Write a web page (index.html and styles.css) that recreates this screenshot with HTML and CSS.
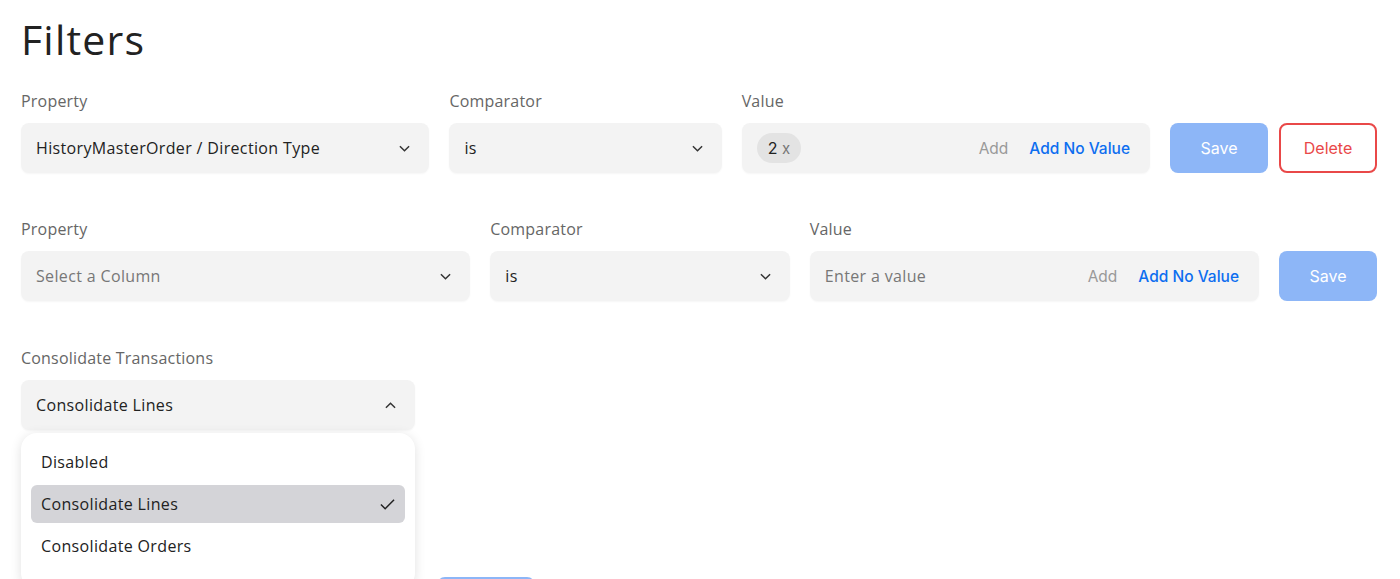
FILE: index.html
```html
<!DOCTYPE html>
<html lang="en">
<head>
    <meta charset="UTF-8">
    <meta name="viewport" content="width=device-width, initial-scale=1.0">
    <title>Filters</title>
    <link rel="stylesheet" href="styles.css">
</head>
<body>

<div class="page">
    <h1 class="title">Filters</h1>

    <!-- Existing filter -->
    <div class="filter-row">
        <div class="field wide">
            <label>Property</label>
            <div class="select">
                <span>HistoryMasterOrder / Direction Type</span>
                <svg class="chevron" viewBox="0 0 12 7"><path d="M1 1l5 5 5-5"/></svg>
            </div>
        </div>
        <div class="field narrow">
            <label>Comparator</label>
            <div class="select">
                <span>is</span>
                <svg class="chevron" viewBox="0 0 12 7"><path d="M1 1l5 5 5-5"/></svg>
            </div>
        </div>
        <div class="field wide">
            <label>Value</label>
            <div class="value-box">
                <span class="chip">2 <span class="chip-x">x</span></span>
                <span class="spacer"></span>
                <span class="add">Add</span>
                <span class="add-none">Add No Value</span>
            </div>
        </div>
        <div class="buttons">
            <button class="btn save">Save</button>
            <button class="btn delete">Delete</button>
        </div>
    </div>

    <!-- New filter -->
    <div class="filter-row">
        <div class="field wide">
            <label>Property</label>
            <div class="select">
                <span class="placeholder">Select a Column</span>
                <svg class="chevron" viewBox="0 0 12 7"><path d="M1 1l5 5 5-5"/></svg>
            </div>
        </div>
        <div class="field narrow">
            <label>Comparator</label>
            <div class="select">
                <span>is</span>
                <svg class="chevron" viewBox="0 0 12 7"><path d="M1 1l5 5 5-5"/></svg>
            </div>
        </div>
        <div class="field wide">
            <label>Value</label>
            <div class="value-box">
                <span class="placeholder">Enter a value</span>
                <span class="spacer"></span>
                <span class="add">Add</span>
                <span class="add-none">Add No Value</span>
            </div>
        </div>
        <div class="buttons">
            <button class="btn save">Save</button>
        </div>
    </div>

    <!-- Consolidate -->
    <div class="consolidate">
        <label>Consolidate Transactions</label>
        <div class="dropdown">
            <div class="select open">
                <span>Consolidate Lines</span>
                <svg class="chevron" viewBox="0 0 12 7"><path d="M1 6l5-5 5 5"/></svg>
            </div>
            <ul class="menu">
                <li>Disabled</li>
                <li class="selected">Consolidate Lines
                    <svg class="check" viewBox="0 0 16 12"><path d="M1 6.5l4.5 4.5L15 1.5"/></svg>
                </li>
                <li>Consolidate Orders</li>
            </ul>
        </div>
    </div>

    <!-- bottom save, mostly below the fold -->
    <div class="footer">
        <button class="btn save" aria-label="Save"></button>
    </div>
</div>

</body>
</html>
```

FILE: styles.css
```css
body {
    margin: 0;
    font-family: "Open Sans", Arial, sans-serif;
    color: #222;
    background-color: #fff;
}
.page {
    padding: 12px 23px 0 21px;
}
.title {
    margin: 0;
    font-size: 41px;
    font-weight: 500;
    letter-spacing: 1.2px;
    line-height: 54px;
    color: #222;
}
.filter-row {
    display: flex;
    align-items: flex-end;
    gap: 20px;
    margin-top: 24px;
}
.filter-row + .filter-row {
    margin-top: 45px;
}
.field label,
.consolidate label {
    display: block;
    font-size: 16px;
    line-height: 22px;
    letter-spacing: 0.2px;
    color: #666;
    margin-bottom: 11px;
}
.field.wide {
    flex: 3;
    min-width: 0;
}
.field.narrow {
    flex: 2;
    min-width: 0;
}
.select,
.value-box {
    display: flex;
    align-items: center;
    height: 50px;
    box-sizing: border-box;
    padding: 0 19px 0 15px;
    background-color: #f3f3f3;
    border-radius: 8px;
    box-shadow: 0 1px 2px rgba(0, 0, 0, 0.04);
    font-size: 16px;
    letter-spacing: 0.35px;
}
.select span {
    flex: 1;
}
.placeholder {
    color: #777;
}
.chevron {
    width: 11px;
    height: 7px;
    fill: none;
    stroke: #333;
    stroke-width: 1.6;
}
.value-box {
    padding-right: 20px;
}
.chip {
    display: inline-block;
    flex: none;
    height: 30px;
    line-height: 30px;
    padding: 0 11px;
    border-radius: 15px;
    background-color: #e3e3e3;
    font-family: Inter, sans-serif;
    font-size: 16px;
    letter-spacing: 0;
    color: #222;
}
.chip-x {
    color: #777;
    font-size: 15px;
}
.spacer {
    flex: 1;
}
.add {
    font-family: Inter, sans-serif;
    font-size: 15.5px;
    letter-spacing: 0;
    color: #999;
    margin-right: 21px;
}
.add-none {
    font-family: Inter, sans-serif;
    font-size: 15.5px;
    font-weight: 500;
    letter-spacing: 0;
    color: #0d6ef0;
}
.buttons {
    display: flex;
    gap: 11px;
}
.btn {
    width: 98px;
    height: 50px;
    box-sizing: border-box;
    border-radius: 8px;
    font-family: Inter, sans-serif;
    font-size: 16px;
    cursor: pointer;
}
.btn.save {
    border: none;
    background-color: #8db6f7;
    color: #fff;
}
.btn.delete {
    border: 2px solid #e94848;
    background-color: #fff;
    color: #e94848;
}
.consolidate {
    margin-top: 46px;
    width: 394px;
}
.dropdown {
    position: relative;
}
.menu {
    position: absolute;
    top: 53px;
    left: 0;
    right: 0;
    z-index: 2;
    margin: 0;
    padding: 10px 10px 20px;
    list-style: none;
    background-color: #fff;
    border-radius: 16px;
    box-shadow: 0 2px 12px rgba(0, 0, 0, 0.12);
}
.menu li {
    display: flex;
    align-items: center;
    justify-content: space-between;
    height: 38px;
    padding: 0 10px;
    margin-bottom: 4px;
    border-radius: 6px;
    font-size: 16px;
    letter-spacing: 0.35px;
    color: #222;
}
.menu li.selected {
    background-color: #d4d4d8;
}
.check {
    width: 15px;
    height: 12px;
    fill: none;
    stroke: #222;
    stroke-width: 1.6;
}
.footer {
    margin-top: 147px;
    padding-left: 416px;
}
```
